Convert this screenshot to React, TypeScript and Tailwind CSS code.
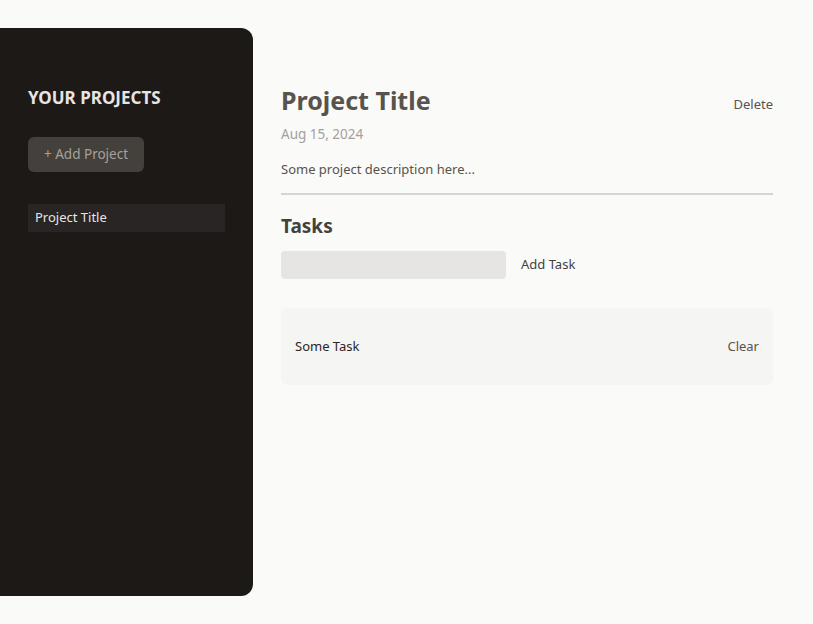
export default function App() {
  return (
    <div
      className="flex h-screen gap-7 bg-stone-50 py-7"
      style={{ fontFamily: '"Noto Sans", "Open Sans", sans-serif' }}
    >
      <aside className="w-[253px] shrink-0 rounded-r-xl bg-stone-900 px-7 pt-[57px]">
        <h2 className="mb-[26px] text-[17px] font-bold uppercase text-stone-200">Your Projects</h2>
        <div>
          <button className="h-[35px] rounded-md bg-stone-700 px-4 text-[13.5px] text-stone-400">
            + Add Project
          </button>
        </div>
        <ul className="mt-8">
          <li>
            <button className="h-7 w-full bg-stone-800 px-[7px] text-left text-[13px] text-stone-200">
              Project Title
            </button>
          </li>
        </ul>
      </aside>

      <div className="mt-[54px] w-[492px]">
        <header className="mb-[17px] border-b-2 border-stone-300 pb-[14px]">
          <div className="flex items-center justify-between">
            <h1 className="mb-1 text-[25px] font-bold text-stone-600">Project Title</h1>
            <button className="mt-1 text-[13px] text-stone-600">Delete</button>
          </div>
          <p className="mb-4 text-[13.5px] text-stone-400">Aug 15, 2024</p>
          <p className="text-[13px] text-stone-600">Some project description here...</p>
        </header>

        <section>
          <h2 className="mb-[10px] text-[19px] font-bold text-stone-700">Tasks</h2>
          <div className="flex items-center gap-[15px]">
            <input className="h-7 w-[225px] rounded-sm bg-stone-200 px-2 py-1" />
            <button className="text-[13px] text-stone-700">Add Task</button>
          </div>
          <ul className="mt-[29px] rounded-md bg-stone-100 px-[14px] py-[29px]">
            <li className="flex justify-between text-[13px]">
              <span className="text-stone-800">Some Task</span>
              <button className="text-stone-600">Clear</button>
            </li>
          </ul>
        </section>
      </div>
    </div>
  );
}
